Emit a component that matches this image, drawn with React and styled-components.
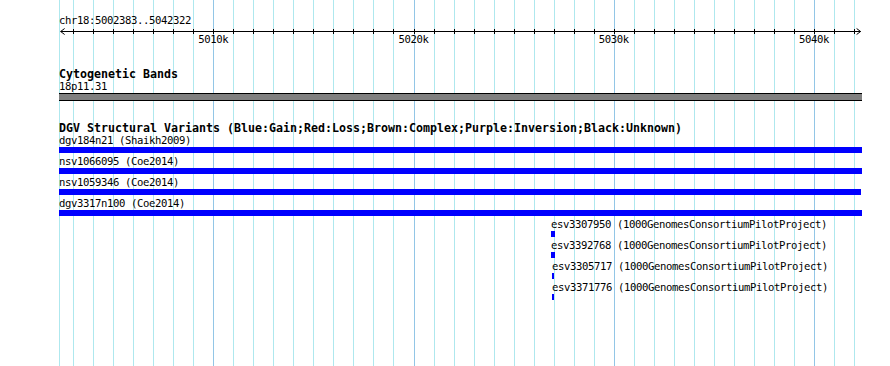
import React from 'react';
import styled, {createGlobalStyle} from 'styled-components';

const GlobalStyle = createGlobalStyle`
    html, body {
        margin: 0;
        padding: 0;
        background: #ffffff;
    }
`

// genome -> pixel (page coords); panel starts at x=59
const PANEL_LEFT = 59;
const toX = pos => 213.2 + (pos - 5010000) * 0.02003;
const localX = pos => toX(pos) - PANEL_LEFT;

const minorTicks = [];
for (let p = 5003000; p <= 5042000; p += 1000) minorTicks.push(p);
const majorTicks = [5010000, 5020000, 5030000, 5040000];

const dgvRows = [
    {name: 'dgv184n21 (Shaikh2009)', start: 0, width: 803},
    {name: 'nsv1066095 (Coe2014)', start: 0, width: 803},
    {name: 'nsv1059346 (Coe2014)', start: 0, width: 802},
    {name: 'dgv3317n100 (Coe2014)', start: 0, width: 803},
    {name: 'esv3307950 (1000GenomesConsortiumPilotProject)', start: 492, width: 4},
    {name: 'esv3392768 (1000GenomesConsortiumPilotProject)', start: 492, width: 4},
    {name: 'esv3305717 (1000GenomesConsortiumPilotProject)', start: 493, width: 2},
    {name: 'esv3371776 (1000GenomesConsortiumPilotProject)', start: 493, width: 2},
];

const Canvas = styled.div`
    position: relative;
    width: 890px;
    height: 366px;
    overflow: hidden;
    background: #ffffff;
    color: #000000;
`

const GridLayer = styled.svg`
    position: absolute;
    left: 0;
    top: 0;
    z-index: 0;
`

const Panel = styled.div`
    position: relative;
    z-index: 1;
    box-sizing: border-box;
    width: 862px;
    padding: 14px 0 0 ${PANEL_LEFT}px;
    display: flex;
    flex-direction: column;
`

const Small = styled.div`
    font-family: "DejaVu Sans Mono", monospace;
    font-size: 10.6px;
    letter-spacing: -0.38px;
    line-height: 13px;
    height: 13px;
    white-space: pre;
`

const Title = styled.div`
    font-family: "DejaVu Sans Mono", monospace;
    font-weight: bold;
    font-size: 11.63px;
    line-height: 14px;
    height: 13px;
    white-space: pre;
`

const Track = styled.section`
    display: flex;
    flex-direction: column;
    margin-top: ${props => props.gap || 0}px;
`

const Axis = styled.svg`
    display: block;
    overflow: visible;
`

const TickLabels = styled.div`
    position: relative;
    height: 13px;
`

const TickLabel = styled(Small)`
    position: absolute;
    top: 0;
    transform: translateX(-50%);
`

const Band = styled.div`
    box-sizing: border-box;
    width: 803px;
    height: 8px;
    background: #808080;
    border-top: 1px solid #000;
    border-bottom: 1px solid #000;
`

const Row = styled.div`
    display: flex;
    flex-direction: column;
    margin-bottom: 2px;
`

const Bar = styled.div`
    height: 6px;
    background: #0000ff;
`

const Grid = () => (
    <GridLayer width="890" height="366">
        <rect x={PANEL_LEFT} y="0" width="1" height="366" fill="#aee8ee"/>
        {minorTicks.map(p => (
            <rect key={p} x={Math.round(toX(p))} y="0" width="1" height="366"
                  fill={majorTicks.includes(p) ? "#92c6e6" : "#aee8ee"}/>
        ))}
    </GridLayer>
)

const Ruler = () => {
    const x0 = localX(5002383);
    const x1 = localX(5042322);
    return(
        <Track>
            <Small>chr18:5002383..5042322</Small>
            <Axis width="803" height="6">
                <line x1={x0} y1="4.5" x2={x1} y2="4.5" stroke="#000" strokeWidth="1"/>
                <polyline points={`${x0 + 4},1.5 ${x0},4.5 ${x0 + 4},7.5`} fill="none" stroke="#000"/>
                <polyline points={`${x1 - 4},1.5 ${x1},4.5 ${x1 - 4},7.5`} fill="none" stroke="#000"/>
                {minorTicks.map(p => {
                    const x = Math.round(toX(p)) - PANEL_LEFT + 0.5;
                    return <line key={p} x1={x} y1="2" x2={x} y2="7" stroke="#000"/>
                })}
            </Axis>
            <TickLabels>
                {majorTicks.map(p => (
                    <TickLabel key={p} style={{left: localX(p)}}>{p / 1000}k</TickLabel>
                ))}
            </TickLabels>
        </Track>
    )
}

export default () => {
    return(
        <Canvas>
            <GlobalStyle/>
            <Grid/>
            <Panel>
                <Ruler/>
                <Track gap={21}>
                    <Title>Cytogenetic Bands</Title>
                    <Small>18p11.31</Small>
                    <Band/>
                </Track>
                <Track gap={20}>
                    <Title>DGV Structural Variants (Blue:Gain;Red:Loss;Brown:Complex;Purple:Inversion;Black:Unknown)</Title>
                    {dgvRows.map(r => (
                        <Row key={r.name}>
                            <Small style={{marginLeft: r.start}}>{r.name}</Small>
                            <Bar style={{marginLeft: r.start, width: r.width}}/>
                        </Row>
                    ))}
                </Track>
            </Panel>
        </Canvas>
    )
}
